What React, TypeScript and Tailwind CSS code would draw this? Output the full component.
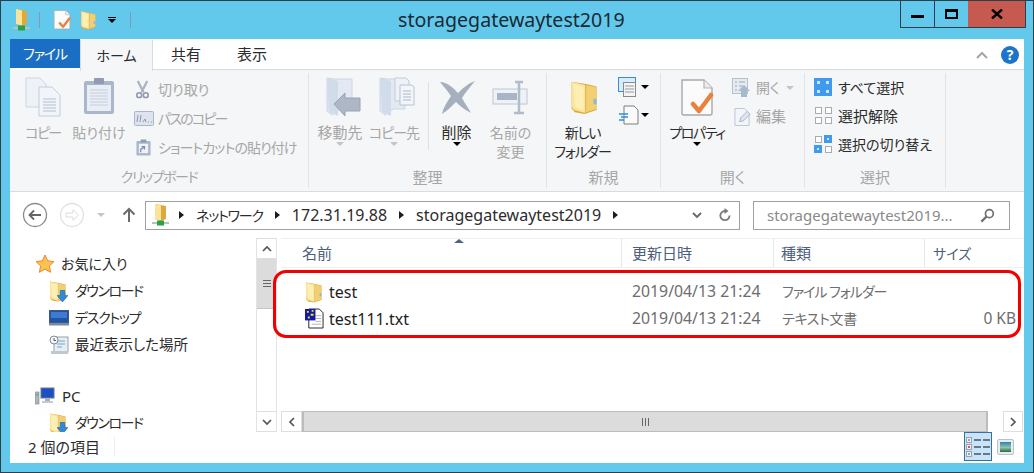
import type { ReactNode } from 'react';

const Folder = ({ className = 'w-[18px] h-[22px]', faded = false }: { className?: string; faded?: boolean }) => (
  <svg viewBox="0 0 18 22" className={className}>
    <path d="M1 1.5 L10 3 L16.5 4.5 V19 L9 21.5 L3 20.5 L1 18 Z" fill={faded ? '#e9d9a8' : '#dca93a'} />
    <path d="M10 3.5 L16.5 5 V18.5 L10 20.5 Z" fill={faded ? '#f3e6bd' : '#f1cf72'} />
    <path d="M1 1.5 L9.5 3.5 V21 L2.5 19 L1 17 Z" fill={faded ? '#f8efcf' : '#fbe49a'} />
    <path d="M2 3 L8.5 4.5 V19 L3 17.5 Z" fill={faded ? '#fbf5de' : '#fdeeb4'} />
    <rect x="14.5" y="12" width="2" height="3.5" rx="1" fill="#8fb8d8" />
  </svg>
);

const NetworkFolder = ({ className = 'w-[17px] h-[24px]' }: { className?: string }) => (
  <svg viewBox="0 0 17 24" className={className}>
    <path d="M3 1 L14 3 V16 L9 18 L3 16 Z" fill="#dca93a" />
    <path d="M3 1 L9 2.5 V17.5 L3 16 Z" fill="#fbe49a" />
    <rect x="0" y="19" width="17" height="2" fill="#b9c2b4" />
    <rect x="5" y="17.5" width="7" height="5" fill="#27a24a" />
  </svg>
);

const DownloadFolder = () => (
  <div className="relative w-[19px] h-[22px] shrink-0">
    <Folder />
    <svg viewBox="0 0 10 11" className="absolute right-0 bottom-0 w-[11px] h-[12px]">
      <path d="M3 0h4v5h3L5 11 0 5h3z" fill="#2f8bd8" stroke="#1d5f9f" strokeWidth="0.5" />
    </svg>
  </div>
);

const PropertiesPage = ({ className }: { className: string }) => (
  <svg viewBox="0 0 34 38" className={className}>
    <path d="M2 1h22l8 8v25a2 2 0 0 1-2 2H4a2 2 0 0 1-2-2z" fill="#fbfbfb" stroke="#a9a9a9" strokeWidth="1.4" />
    <path d="M24 1v8h8" fill="#ececec" stroke="#b4b4b4" strokeWidth="1.2" />
    <path d="M13 25l6 7 12-16" fill="none" stroke="#e9803f" strokeWidth="4.5" strokeLinecap="round" strokeLinejoin="round" />
  </svg>
);

const CopyIcon = () => (
  <svg viewBox="0 0 36 40" className="w-[36px] h-[40px]">
    <path d="M1 1h14l6 6v23H1z" fill="#eef2f8" stroke="#ccd5e3" />
    <path d="M14 10h13l8 8v21H14z" fill="#f1f4f9" stroke="#c3cddd" />
    <path d="M18 22h13M18 25h13M18 28h13M18 31h13M18 34h13" stroke="#b5c0d2" />
  </svg>
);

const PasteIcon = () => (
  <svg viewBox="0 0 32 38" className="w-[32px] h-[38px]">
    <rect x="1" y="4" width="30" height="33" rx="2" fill="#a9b6cc" />
    <rect x="4" y="8" width="24" height="26" fill="#e9edf4" />
    <rect x="11" y="1" width="10" height="6" rx="1" fill="#8f9cb4" />
    <path d="M7 13h18M7 16h18M7 19h18M7 22h18M7 25h18M7 28h18" stroke="#c5cedd" />
  </svg>
);

const MoveIcon = ({ copy = false }: { copy?: boolean }) => (
  <svg viewBox="0 0 36 40" className="w-[36px] h-[40px]">
    <path d="M1 1 L8 2 H26 V32 H14 L6 38 L1 34 Z" fill="#e2e9f3" stroke="#ccd6e5" />
    <path d="M1 1 L12 4 V39 L3 35 Z" fill="#d1dceb" />
    {copy ? (
      <g>
        <path d="M16 1h11l3 3v20H16z" fill="#eef2f7" stroke="#c0cad9" />
        <path d="M21 8h12l2 2v18H21z" fill="#f2f5f9" stroke="#b8c3d3" />
        <path d="M24 14h8M24 17h8M24 20h8M24 23h8" stroke="#aeb9ca" />
      </g>
    ) : (
      <path d="M34 21v13h-15v5L8 27l11-11v5z" fill="#aeb7c6" stroke="#98a3b5" />
    )}
  </svg>
);

const DeleteIcon = () => (
  <svg viewBox="0 0 38 36" className="w-[38px] h-[36px]">
    <path d="M2 2 C10 2 16 9 20 13 C25 8 31 3 37 1 C32 7 27 13 24 18 C27 24 31 29 33 33 C27 30 22 26 18 22 C13 27 9 31 4 34 C5 28 9 22 13 16 C9 10 5 6 2 2Z" fill="#a5afbd" />
  </svg>
);

const RenameIcon = () => (
  <svg viewBox="0 0 38 36" className="w-[38px] h-[36px]">
    <rect x="1" y="9" width="34" height="15" fill="#eef2f7" stroke="#bcc6d5" />
    <rect x="5" y="13" width="20" height="7" fill="#a9b4c5" />
    <path d="M23 2h8M27 2v31M22 33h10" stroke="#b0bbcc" strokeWidth="2.5" fill="none" />
  </svg>
);

const SmallArrowDown = ({ muted = false }: { muted?: boolean }) => (
  <span
    className={`block w-0 h-0 border-x-[4px] border-x-transparent border-t-[4px] ${muted ? 'border-t-[#c2c6cb]' : 'border-t-black'}`}
  />
);

const Crumb = () => (
  <span className="block w-0 h-0 border-y-[4px] border-y-transparent border-l-[5px] border-l-[#1c1c1c] mx-[12px]" />
);

const LargeButton = ({
  icon,
  lines,
  width,
  dim = true,
  arrow,
  iconOffset = '',
  lineClass = '',
}: {
  icon: ReactNode;
  lines: string[];
  width: string;
  dim?: boolean;
  arrow?: 'dark' | 'muted';
  iconOffset?: string;
  lineClass?: string;
}) => (
  <div className={`flex flex-col items-center ${width}`}>
    <div className={`h-[47px] flex items-start justify-center ${iconOffset}`}>{icon}</div>
    {lines.map(line => (
      <div key={line} className={`h-[19px] leading-[19px] whitespace-nowrap ${dim ? 'text-[#a6a6a6]' : 'text-[#2c2c2c]'} ${lineClass}`}>
        {line}
      </div>
    ))}
    {arrow && <SmallArrowDown muted={arrow === 'muted'} />}
  </div>
);

const SmallRow = ({
  icon,
  label,
  arrow = false,
  labelClass = '',
}: {
  icon: ReactNode;
  label: string;
  arrow?: boolean;
  labelClass?: string;
}) => (
  <div className="h-[29px] flex items-center whitespace-nowrap text-[#a6a6a6]">
    <div className="w-[24px] flex items-center shrink-0">{icon}</div>
    <span className={labelClass}>{label}</span>
    {arrow && (
      <span className="ml-[6px]">
        <SmallArrowDown muted />
      </span>
    )}
  </div>
);

const Group = ({ label, width, children, labelClass = 'text-[15px]' }: { label: string; width: string; children: ReactNode; labelClass?: string }) => (
  <div className={`mt-[3px] h-[115px] flex flex-col border-r border-[#e2e3e4] shrink-0 ${width}`}>
    <div className="h-[93px] pt-[3px] flex items-start">{children}</div>
    <div className={`h-[22px] leading-[22px] text-center text-[#a6a6a6] ${labelClass}`}>{label}</div>
  </div>
);

const SelectGrid = ({ on }: { on: number[] }) => (
  <div className={`grid grid-cols-2 w-[18px] h-[18px] ${on.length === 4 ? 'gap-0' : 'gap-[2px]'}`}>
    {[0, 1, 2, 3].map(i => (
      <span
        key={i}
        className={on.includes(i) ? 'border-[3px] border-[#3f9bf0] bg-[#cfe5fa]' : 'border-[1.5px] border-[#ababab] bg-white m-[0.5px]'}
      />
    ))}
  </div>
);

function Ribbon() {
  return (
    <div className="h-[122px] bg-[#f5f6f7] border-b border-[#dadbdc] flex">
      <Group label="クリップボード" width="w-[299px]" labelClass="tracking-[-1.4px]">
        <div className="pl-[4px] flex">
          <LargeButton width="w-[58px]" lines={['コピー']} lineClass="tracking-[-1.6px]" icon={<CopyIcon />} iconOffset="pt-[1px]" />
          <LargeButton width="w-[54px]" lines={['貼り付け']} icon={<PasteIcon />} iconOffset="pt-[1px]" />
        </div>
        <div className="pl-[8px] -mt-[1px]">
          <SmallRow
            label="切り取り"
            icon={
              <svg viewBox="0 0 16 20" className="w-[15px] h-[19px] ml-[1px]">
                <path d="M3 1l6 12M13 1L7 13" stroke="#a8b3c4" strokeWidth="2.4" />
                <circle cx="4.5" cy="16" r="2.6" fill="none" stroke="#8c98ab" strokeWidth="1.6" />
                <circle cx="11.5" cy="16" r="2.6" fill="none" stroke="#8c98ab" strokeWidth="1.6" />
              </svg>
            }
          />
          <SmallRow
            label="パスのコピー"
            labelClass="tracking-[-1.8px]"
            icon={
              <svg viewBox="0 0 20 15" className="w-[20px] h-[15px]">
                <rect x="0.5" y="0.5" width="19" height="14" rx="1" fill="#dde4ef" stroke="#aab5c6" />
                <path d="M4 4l-1 7M7 4l-1 7M9 11l2-3 1 3M14 11h1M17 11h1" stroke="#8c98ab" fill="none" />
              </svg>
            }
          />
          <SmallRow
            label="ショートカットの貼り付け"
            labelClass="tracking-[-0.9px]"
            icon={
              <svg viewBox="0 0 16 18" className="w-[15px] h-[17px] ml-[2px]">
                <rect x="0.5" y="2" width="15" height="15.5" rx="1" fill="#a9b6cc" />
                <rect x="3" y="5" width="10" height="10" fill="#eef1f6" />
                <rect x="5" y="0.5" width="6" height="3" fill="#8f9cb4" />
                <path d="M5 14v-3l3-2M6 8h3v3" stroke="#7e8ca3" fill="none" strokeWidth="1.3" />
              </svg>
            }
          />
        </div>
      </Group>

      <Group label="整理" width="w-[238px]">
        <div className="pl-[5px] flex items-start">
          <LargeButton width="w-[52px]" lines={['移動先']} lineClass="text-[15px]" icon={<MoveIcon />} iconOffset="pt-[1px] pl-[8px]" arrow="muted" />
          <LargeButton width="w-[56px]" lines={['コピー先']} lineClass="tracking-[-1px]" icon={<MoveIcon copy />} iconOffset="pt-[1px] pl-[6px]" arrow="muted" />
          <div className="ml-[6px] w-px h-[68px] mt-[6px] bg-[#dfe0e1]" />
          <LargeButton width="w-[55px]" lines={['削除']} lineClass="text-[15px]" icon={<DeleteIcon />} iconOffset="pt-[4px]" dim={false} arrow="dark" />
          <LargeButton width="w-[53px]" lines={['名前の', '変更']} icon={<RenameIcon />} iconOffset="pt-[4px]" />
        </div>
      </Group>

      <Group label="新規" width="w-[114px]">
        <LargeButton
          width="w-[71px]"
          lines={['新しい', 'フォルダー']}
          lineClass="tracking-[-1.2px]"
          dim={false}
          icon={<Folder className="w-[29px] h-[40px] ml-[3px]" />}
          iconOffset="pt-[1px]"
        />
        <div className="flex flex-col -mt-[3px]">
          <div className="h-[28px] flex items-center">
            <svg viewBox="0 0 22 20" className="w-[22px] h-[20px]">
              <rect x="0.5" y="0.5" width="17" height="14" fill="#d8ecfb" stroke="#2f8ee0" />
              <rect x="5.5" y="5.5" width="12" height="14" fill="#f4f4f4" stroke="#8a8a8a" />
              <path d="M7 9h9M7 12h9M7 15h9" stroke="#9a9a9a" />
            </svg>
            <span className="ml-[1px]">
              <SmallArrowDown />
            </span>
          </div>
          <div className="h-[28px] flex items-center">
            <svg viewBox="0 0 22 20" className="w-[22px] h-[20px]">
              <path d="M6 1h10l4 4v14H6z" fill="#fafafa" stroke="#7d7d7d" />
              <path d="M1 9h9M3 12h7M1 15h5" stroke="#2f8ee0" strokeWidth="1.4" />
            </svg>
            <span className="ml-[1px]">
              <SmallArrowDown />
            </span>
          </div>
        </div>
      </Group>

      <Group label="開く" width="w-[144px]">
        <div className="pl-[4px]">
          <LargeButton
            width="w-[64px]"
            lines={['プロパティ']}
            lineClass="tracking-[-1.4px]"
            dim={false}
            icon={<PropertiesPage className="w-[34px] h-[38px]" />}
            iconOffset="pt-[3px]"
            arrow="dark"
          />
        </div>
        <div className="pl-[3px] -mt-[3px]">
          <SmallRow
            label="開く"
            arrow
            icon={
              <svg viewBox="0 0 18 20" className="w-[18px] h-[20px]">
                <rect x="0.5" y="0.5" width="15" height="15" fill="#e6ebf2" stroke="#b4bfcf" />
                <path d="M3 4h2M7 4h6M3 8h2M7 8h4M3 12h2" stroke="#9aa6b8" />
                <path d="M12 7l6 6h-3v6h-6v-6H6z" fill="#a8b8cd" />
              </svg>
            }
          />
          <SmallRow
            label="編集"
            labelClass="text-[15px]"
            icon={
              <svg viewBox="0 0 18 20" className="w-[17px] h-[20px] ml-[2px]">
                <path d="M1 1h10l5 5v13H1z" fill="#f2f5f9" stroke="#b9c4d4" />
                <path d="M6 15l1-4 7-7 3 3-7 7z" fill="#dde4ee" stroke="#a9b5c7" />
              </svg>
            }
          />
        </div>
      </Group>

      <Group label="選択" width="w-[141px]">
        <div className="pl-[9px] text-[#2c2c2c] -mt-[3px]">
          {[
            { label: 'すべて選択', on: [0, 1, 2, 3], text: '' },
            { label: '選択解除', on: [] as number[], text: 'text-[15px]' },
            { label: '選択の切り替え', on: [1, 2], text: '' },
          ].map(item => (
            <div key={item.label} className="h-[28.5px] flex items-center whitespace-nowrap">
              <div className="w-[24px] shrink-0">
                <SelectGrid on={item.on} />
              </div>
              <span className={item.text}>{item.label}</span>
            </div>
          ))}
        </div>
      </Group>
    </div>
  );
}

function AddressBar() {
  return (
    <div className="h-[46px] flex items-center shrink-0">
      <div className="w-[135px] flex items-center shrink-0">
        <svg viewBox="0 0 26 26" className="w-[26px] h-[26px] ml-[12px]">
          <circle cx="13" cy="13" r="11.5" fill="none" stroke="#8a8a8a" strokeWidth="1.3" />
          <path d="M19 13H8M12 8.5L7.5 13l4.5 4.5" fill="none" stroke="#666" strokeWidth="1.8" />
        </svg>
        <svg viewBox="0 0 26 26" className="w-[26px] h-[26px] ml-[11px]">
          <circle cx="13" cy="13" r="11.5" fill="none" stroke="#e1e1e1" strokeWidth="1.3" />
          <path d="M7 11h7V7.5l5.5 5.5-5.5 5.5V15H7z" fill="none" stroke="#dcdcdc" />
        </svg>
        <span className="ml-[12px]">
          <SmallArrowDown muted />
        </span>
        <svg viewBox="0 0 14 16" className="w-[14px] h-[16px] ml-[17px]">
          <path d="M7 15V2M1.5 7.5L7 2l5.5 5.5" fill="none" stroke="#6c6c6c" strokeWidth="2" />
        </svg>
      </div>
      <div className="w-[595px] h-[29px] border border-[#a0a0a0] flex items-center pl-[6px] text-[#2c2c2c] shrink-0">
        <NetworkFolder />
        <span className="-ml-[2px]">
          <Crumb />
        </span>
        <span className="whitespace-nowrap tracking-[-1.2px]">ネットワーク</span>
        <Crumb />
        <span className="text-[16px]">172.31.19.88</span>
        <Crumb />
        <span className="text-[16px]">storagegatewaytest2019</span>
        <Crumb />
        <svg viewBox="0 0 10 7" className="w-[10px] h-[7px] ml-auto mr-[16px]">
          <path d="M1 1l4 4 4-4" fill="none" stroke="#666" strokeWidth="1.8" />
        </svg>
        <svg viewBox="0 0 14 14" className="w-[14px] h-[14px] mr-[7px]">
          <path d="M11.5 7.5A4.6 4.6 0 1 1 7 3" fill="none" stroke="#7a7a7a" strokeWidth="1.8" />
          <path d="M6.5 0l4 3-4 3z" fill="#7a7a7a" />
        </svg>
      </div>
      <div className="ml-[13px] w-[257px] h-[29px] border border-[#a0a0a0] flex items-center pl-[13px] text-[15px] text-[#8a8a8a] shrink-0">
        <span className="whitespace-nowrap">storagegatewaytest2019...</span>
        <svg viewBox="0 0 16 16" className="w-[15px] h-[15px] ml-auto mr-[14px]">
          <circle cx="10" cy="6" r="4.2" fill="none" stroke="#6e6e6e" strokeWidth="1.8" />
          <path d="M7 9l-5.5 5.5" stroke="#6e6e6e" strokeWidth="2.4" />
        </svg>
      </div>
    </div>
  );
}

const NavItem = ({ icon, label, labelClass = '' }: { icon: ReactNode; label: string; labelClass?: string }) => (
  <div className="h-[27px] flex items-center pl-[39px] text-[#2c2c2c]">
    <div className="w-[26px] shrink-0 flex items-center">{icon}</div>
    <span className={`whitespace-nowrap ${labelClass}`}>{label}</span>
  </div>
);

function NavPane() {
  return (
    <div className="w-[246px] h-[194px] pt-[12px] shrink-0 overflow-hidden">
      <div className="h-[27px] flex items-center pl-[25px] text-[#2c2c2c]">
        <svg viewBox="0 0 20 20" className="w-[20px] h-[20px] mr-[6px]">
          <path d="M10 1l2.7 5.8 6.3.8-4.6 4.4 1.2 6.3L10 15.2 4.4 18.3l1.2-6.3L1 7.6l6.3-.8z" fill="#fbc24f" stroke="#e8883a" />
        </svg>
        お気に入り
      </div>
      <NavItem icon={<DownloadFolder />} label="ダウンロード" labelClass="tracking-[-1.5px]" />
      <NavItem
        label="デスクトップ"
        labelClass="tracking-[-1.3px]"
        icon={
          <svg viewBox="0 0 20 16" className="w-[20px] h-[16px]">
            <rect x="0.5" y="0.5" width="19" height="12" fill="#1f55a8" stroke="#47597a" />
            <rect x="2" y="2" width="16" height="6" fill="#3b7cd2" />
            <rect x="0" y="13" width="20" height="2.5" fill="#7c8aa0" />
          </svg>
        }
      />
      <NavItem
        label="最近表示した場所"
        icon={
          <svg viewBox="0 0 20 20" className="w-[20px] h-[20px]">
            <rect x="5" y="2" width="14" height="15" fill="#e8edf2" stroke="#97a2ad" />
            <path d="M8 6h8M8 9h8M8 12h5" stroke="#6fa7c9" />
            <circle cx="5" cy="5" r="4" fill="#f4f6f8" stroke="#7f8b96" />
            <path d="M5 3v2.5h2" stroke="#51606c" fill="none" />
            <rect x="2" y="16" width="17" height="3" fill="#bfc7cf" />
          </svg>
        }
        labelClass="text-[14.5px]"
      />
      <div className="h-[25px]" />
      <div className="h-[26px] flex items-center pl-[25px] text-[15px] text-[#2c2c2c]">
        <svg viewBox="0 0 20 18" className="w-[20px] h-[18px] mr-[7px]">
          <rect x="6" y="1" width="13" height="10" fill="#1d4fc4" stroke="#6c7785" />
          <rect x="10" y="12" width="5" height="2" fill="#a6aeb7" />
          <rect x="7" y="14" width="11" height="2" fill="#c4cad0" />
          <rect x="0.5" y="5" width="3.5" height="12" fill="#aeb5bb" stroke="#7c858d" strokeWidth="0.6" />
          <rect x="1.5" y="7" width="1.5" height="1.5" fill="#43b04a" />
        </svg>
        PC
      </div>
      <NavItem icon={<DownloadFolder />} label="ダウンロード" labelClass="tracking-[-1.5px]" />
    </div>
  );
}

const ScrollButton = ({ d, className = '' }: { d: string; className?: string }) => (
  <div className={`flex items-center justify-center bg-white border border-[#dedede] shrink-0 ${className}`}>
    <svg viewBox="0 0 12 12" className="w-[12px] h-[12px]">
      <path d={d} fill="none" stroke="#555" strokeWidth="1.7" />
    </svg>
  </div>
);

function VerticalScrollbar() {
  return (
    <div className="w-[21px] h-[194px] flex flex-col shrink-0 bg-white border-x border-[#e3e3e3]">
      <ScrollButton d="M2 8l4-4 4 4" className="h-[21px] border-x-0" />
      <div className="h-[50px] bg-[#dcdcdc] border-b border-[#c4c4c4] flex flex-col items-center justify-center gap-[2px]">
        <span className="w-[8px] h-px bg-[#666]" />
        <span className="w-[8px] h-px bg-[#666]" />
        <span className="w-[8px] h-px bg-[#666]" />
      </div>
      <div className="flex-1" />
      <ScrollButton d="M2 4l4 4 4-4" className="h-[21px] border-x-0" />
    </div>
  );
}

const HeaderCell = ({ label, width, pad }: { label: string; width: string; pad: string }) => (
  <div className={`h-full flex items-center border-r border-[#e6e6e6] text-[15px] text-[#4c607a] shrink-0 ${width} ${pad}`}>{label}</div>
);

const FileRow = ({
  icon,
  name,
  type,
  typeClass,
  size,
}: {
  icon: ReactNode;
  name: string;
  type: string;
  typeClass: string;
  size?: string;
}) => (
  <div className="h-[27px] flex items-center">
    <div className="w-[356px] shrink-0 flex items-center pl-[29px] text-[16px] text-[#1e1e1e]">
      <div className="w-[24px] shrink-0 flex items-center">{icon}</div>
      {name}
    </div>
    <div className="w-[150px] shrink-0 text-[15.8px] text-[#6d6d6d]">2019/04/13 21:24</div>
    <div className={`w-[180px] shrink-0 text-[#6d6d6d] whitespace-nowrap ${typeClass}`}>{type}</div>
    <div className="w-[54px] shrink-0 text-right text-[15.5px] text-[#6d6d6d]">{size}</div>
  </div>
);

function FileList() {
  return (
    <div className="relative flex-1 h-[194px] pl-[4px] flex flex-col">
      <div className="relative h-[30px] flex items-center bg-white border-y border-[#f0f0f0] shrink-0">
        <HeaderCell label="名前" width="w-[341px]" pad="pl-[21px]" />
        <HeaderCell label="更新日時" width="w-[152px]" pad="pl-[10px]" />
        <HeaderCell label="種類" width="w-[151px]" pad="pl-[7px]" />
        <div className="pl-[8px] text-[#4c607a]">サイズ</div>
        <span className="absolute left-[173px] top-[0px] w-0 h-0 border-x-[5px] border-x-transparent border-b-[4px] border-b-[#50647f]" />
      </div>
      <div className="flex-1 min-h-0 pt-[2px]">
        <div className="w-[748px] -ml-[8px] h-[68px] border-[3px] border-[#f00000] rounded-[13px] pt-[5px]">
          <FileRow icon={<Folder />} name="test" type="ファイル フォルダー" typeClass="tracking-[-1px]" />
          <FileRow
            name="test111.txt"
            type="テキスト文書"
            typeClass="tracking-[-0.3px]"
            size="0 KB"
            icon={
              <svg viewBox="0 0 20 22" className="w-[19px] h-[21px]">
                <path d="M4 1h11l4 4v16H4z" fill="#fff" stroke="#222" />
                <path d="M11 8h6M11 11h6M11 14h6M7 17h10" stroke="#b0b0b0" />
                <rect x="0" y="1" width="11" height="12" fill="#1418a8" />
                <path d="M2 3h2v2H2zM6 6h3v2H6zM3 9h2v2H3zM7 2h2v2H7z" fill="#f3e21a" />
              </svg>
            }
          />
        </div>
      </div>
      <div className="h-[21px] flex shrink-0 bg-white">
        <ScrollButton d="M8 2L4 6l4 4" className="w-[21px]" />
        <div className="w-[686px] bg-[#dcdcdc] border-y border-[#bcbcbc] border-x-2 border-x-[#bcbcbc] flex items-center justify-center gap-[2px]">
          <span className="w-px h-[8px] bg-[#666]" />
          <span className="w-px h-[8px] bg-[#666]" />
          <span className="w-px h-[8px] bg-[#666]" />
        </div>
        <div className="w-[15px]" />
        <ScrollButton d="M4 2l4 4-4 4" className="w-[20px]" />
      </div>
    </div>
  );
}

function StatusBar() {
  return (
    <div className="h-[29px] flex items-center text-[#2c2c2c] shrink-0">
      <div className="w-[105px] pl-[18px] h-[20px] leading-[20px] text-[15px] border-r border-[#eeeeee] whitespace-nowrap">2 個の項目</div>
      <div className="ml-auto h-full w-[28px] bg-[#c7e4f8] border border-[#3a6f96] flex flex-col items-center justify-center gap-[1px]">
        {['#9aa3ad', '#d9534f', '#9aa3ad'].map((color, i) => (
          <div key={i} className="flex items-center gap-[2px]">
            <span className="w-[6px] h-[6px] bg-[#eef1f4] border border-[#9aa3ad] flex items-center justify-center">
              <span className="block w-[2px] h-[2px]" style={{ backgroundColor: color }} />
            </span>
            <span className="w-[7px] h-[2px] bg-[#6b7785]" />
            <span className="w-[7px] h-[2px] bg-[#6b7785]" />
          </div>
        ))}
      </div>
      <div className="ml-[5px] mr-[10px] w-[17px] h-[16px] border border-[#b7c2cc] bg-[#e6edf3] rounded-[2px] p-[2px]">
        <span className="block w-full h-full bg-[linear-gradient(to_bottom,#2f7fb8_0%,#8cc5a9_55%,#2b6a3f_100%)]" />
      </div>
    </div>
  );
}

export default function App() {
  return (
    <div className="w-[1034px] h-[473px] overflow-hidden flex flex-col bg-[#63c9ec] border border-[#2f3f4a] font-['Noto_Sans','Noto_Sans_CJK_JP',sans-serif] text-[14px] [font-feature-settings:'palt']">
      {/* title bar */}
      <div className="h-[38px] flex items-start shrink-0">
        <div className="w-[397px] h-full flex items-center pl-[12px] shrink-0">
          <NetworkFolder />
          <span className="ml-[9px] w-px h-[16px] bg-[#7f9ea9]" />
          <span className="ml-[13px]">
            <PropertiesPage className="w-[18px] h-[20px]" />
          </span>
          <span className="ml-[9px]">
            <Folder className="w-[17px] h-[20px]" />
          </span>
          <span className="ml-[11px] flex flex-col items-center gap-[1px]">
            <span className="w-[8px] h-px bg-black" />
            <SmallArrowDown />
          </span>
          <span className="ml-[14px] w-px h-[16px] bg-[#7f9ea9]" />
        </div>
        <div className="h-full flex items-center text-[19.6px] text-[#1a2a33] whitespace-nowrap">storagegatewaytest2019</div>
        <div className="ml-auto mr-[7px] flex h-[27px] border border-t-0 border-[#2f3f4a]">
          <div className="w-[34px] flex items-center justify-center border-r border-[#2f3f4a]">
            <span className="w-[13px] h-[3px] bg-black mt-[4px]" />
          </div>
          <div className="w-[33px] flex items-center justify-center">
            <span className="w-[13px] h-[10px] border-[2px] border-t-[3px] border-black" />
          </div>
          <div className="w-[57px] flex items-center justify-center bg-[#c75a50]">
            <svg viewBox="0 0 12 10" className="w-[12px] h-[10px]">
              <path d="M1 0.5l10 9M11 0.5l-10 9" stroke="#000" strokeWidth="2.4" />
            </svg>
          </div>
        </div>
      </div>

      {/* window body */}
      <div className="mx-[9px] w-[1014px] flex-1 min-h-0 bg-white flex flex-col">
        <div className="h-[31px] flex items-end shrink-0 relative text-[#2c2c2c]">
          <div className="w-[70px] h-[29px] self-start bg-[#1a6fc4] text-white flex items-center justify-center tracking-[-1.2px]">ファイル</div>
          <div className="w-[73px] h-[31px] bg-[#f5f6f7] border-x border-[#dadbdc] -mb-px relative z-10 flex items-center justify-center">ホーム</div>
          <div className="w-[66px] h-[30px] flex items-center justify-center border-b border-[#dadbdc] text-[15px]">共有</div>
          <div className="w-[66px] h-[30px] flex items-center justify-center border-b border-[#dadbdc] text-[15px]">表示</div>
          <div className="flex-1 h-[30px] flex items-center justify-end border-b border-[#dadbdc] pr-[5px]">
            <svg viewBox="0 0 12 8" className="w-[12px] h-[8px] mr-[13px]">
              <path d="M1 7l5-5 5 5" fill="none" stroke="#a5a5a5" strokeWidth="2" />
            </svg>
            <span className="w-[18px] h-[18px] rounded-full bg-[#1c75c8] text-white text-[14px] leading-[18px] font-bold text-center">?</span>
          </div>
        </div>
        <Ribbon />
        <AddressBar />
        <div className="flex shrink-0">
          <NavPane />
          <VerticalScrollbar />
          <FileList />
        </div>
        <StatusBar />
      </div>
      <div className="h-[9px] shrink-0" />
    </div>
  );
}
